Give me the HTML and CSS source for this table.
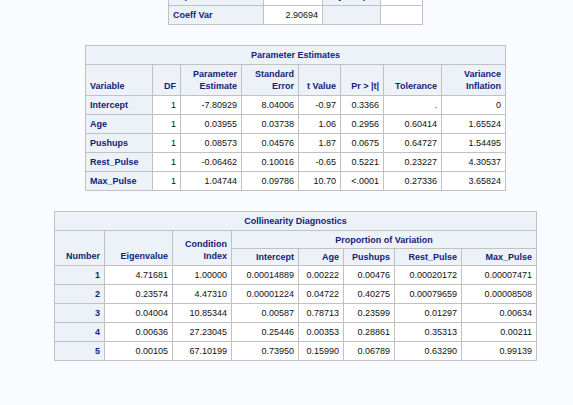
FILE: index.html
```html
<!DOCTYPE html>
<html>
<head>
<meta charset="utf-8">
<link rel="stylesheet" href="styles.css">
</head>
<body>
<div class="page">
  <table class="tbl fit">
    <colgroup><col class="c95"><col class="c59"><col class="c58"><col class="c42"></colgroup>
    <tbody>
      <tr><th class="rowh">Dependent Mean</th><td>109.77</td><th class="rowh">Adj R-Sq</th><td>0.94</td></tr>
      <tr><th class="rowh">Coeff Var</th><td>2.90694</td><th class="rowh"></th><td></td></tr>
    </tbody>
  </table>

  <table class="tbl pe">
    <colgroup>
      <col style="width:67px"><col style="width:28px"><col style="width:61px"><col style="width:57px">
      <col style="width:42px"><col style="width:43px"><col style="width:58px"><col style="width:64px">
    </colgroup>
    <thead>
      <tr><th class="title" colspan="8">Parameter Estimates</th></tr>
      <tr class="hdr">
        <th class="l">Variable</th><th>DF</th><th>Parameter<br>Estimate</th><th>Standard<br>Error</th>
        <th>t Value</th><th>Pr &gt; |t|</th><th>Tolerance</th><th>Variance<br>Inflation</th>
      </tr>
    </thead>
    <tbody>
      <tr><th class="rowh l">Intercept</th><td>1</td><td>-7.80929</td><td>8.04006</td><td>-0.97</td><td>0.3366</td><td>.</td><td>0</td></tr>
      <tr><th class="rowh l">Age</th><td>1</td><td>0.03955</td><td>0.03738</td><td>1.06</td><td>0.2956</td><td>0.60414</td><td>1.65524</td></tr>
      <tr><th class="rowh l">Pushups</th><td>1</td><td>0.08573</td><td>0.04576</td><td>1.87</td><td>0.0675</td><td>0.64727</td><td>1.54495</td></tr>
      <tr><th class="rowh l">Rest_Pulse</th><td>1</td><td>-0.06462</td><td>0.10016</td><td>-0.65</td><td>0.5221</td><td>0.23227</td><td>4.30537</td></tr>
      <tr><th class="rowh l">Max_Pulse</th><td>1</td><td>1.04744</td><td>0.09786</td><td>10.70</td><td>&lt;.0001</td><td>0.27336</td><td>3.65824</td></tr>
    </tbody>
  </table>

  <table class="tbl cd">
    <colgroup>
      <col style="width:50px"><col style="width:68px"><col style="width:59px"><col style="width:67px">
      <col style="width:45px"><col style="width:51px"><col style="width:67px"><col style="width:75px">
    </colgroup>
    <thead>
      <tr><th class="title" colspan="8">Collinearity Diagnostics</th></tr>
      <tr class="prop">
        <th class="hb" rowspan="2">Number</th><th class="hb" rowspan="2">Eigenvalue</th><th class="hb" rowspan="2">Condition<br>Index</th>
        <th class="title" colspan="5">Proportion of Variation</th>
      </tr>
      <tr class="sub">
        <th>Intercept</th><th>Age</th><th>Pushups</th><th>Rest_Pulse</th><th>Max_Pulse</th>
      </tr>
    </thead>
    <tbody>
      <tr><th class="rowh">1</th><td>4.71681</td><td>1.00000</td><td>0.00014889</td><td>0.00222</td><td>0.00476</td><td>0.00020172</td><td>0.00007471</td></tr>
      <tr><th class="rowh">2</th><td>0.23574</td><td>4.47310</td><td>0.00001224</td><td>0.04722</td><td>0.40275</td><td>0.00079659</td><td>0.00008508</td></tr>
      <tr><th class="rowh">3</th><td>0.04004</td><td>10.85344</td><td>0.00587</td><td>0.78713</td><td>0.23599</td><td>0.01297</td><td>0.00634</td></tr>
      <tr><th class="rowh">4</th><td>0.00636</td><td>27.23045</td><td>0.25446</td><td>0.00353</td><td>0.28861</td><td>0.35313</td><td>0.00211</td></tr>
      <tr><th class="rowh">5</th><td>0.00105</td><td>67.10199</td><td>0.73950</td><td>0.15990</td><td>0.06789</td><td>0.63290</td><td>0.99139</td></tr>
    </tbody>
  </table>
</div>
</body>
</html>
```
FILE: styles.css
```css
html, body {
  margin: 0;
  padding: 0;
  background: #fafbfe;
}
body {
  font-family: "Liberation Sans", Arial, sans-serif;
  font-size: 9px;
  color: #000;
  overflow: hidden;
}
.page {
  padding-left: 18px;
  width: 555px;
}
.tbl {
  border-collapse: collapse;
  table-layout: fixed;
  margin: 0 auto 20px auto;
  border: 1px solid #c1c1c1;
}
.tbl th, .tbl td {
  border: 1px solid #c1c1c1;
  padding: 3px 4px 3px 4px;
  line-height: 12px;
  text-align: right;
  white-space: nowrap;
  overflow: hidden;
}
.tbl td {
  background: #fff;
  color: #111;
  font-weight: normal;
}
.tbl th {
  background: #edf2f9;
  color: #112277;
  font-weight: bold;
  vertical-align: bottom;
}
.tbl th.title {
  text-align: center;
}
.tbl th.l, .fit th.rowh {
  text-align: left;
}
.cd .prop th.title {
  padding-top: 3px;
  padding-bottom: 2px;
}
.cd .sub th {
  padding-top: 2px;
  padding-bottom: 2px;
}
.fit {
  margin-top: -14px;
  width: 254px;
}
.c95 { width: 95px; }
.c59 { width: 59px; }
.c58 { width: 58px; }
.c42 { width: 42px; }
.pe { width: 420px; }
.cd { width: 482px; }
```
